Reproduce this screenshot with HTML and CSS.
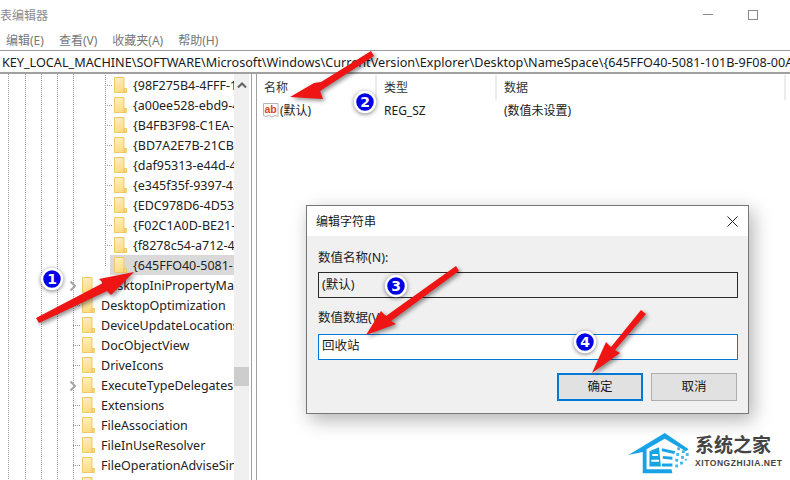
FILE: index.html
```html
<!DOCTYPE html>
<html lang="zh">
<head>
<meta charset="utf-8">
<title>注册表编辑器</title>
<link rel="stylesheet" href="styles.css">
</head>
<body>
<svg class="defs" width="0" height="0">
  <defs>
    <linearGradient id="fold" x1="0" y1="0" x2="0.4" y2="1">
      <stop offset="0" stop-color="#fff1c6"/>
      <stop offset="1" stop-color="#fddc7f"/>
    </linearGradient>
  </defs>
  <symbol id="folder" viewBox="0 0 13 16">
    <path d="M.5.500h9.500v11l2.500 0v4H.5z" fill="url(#fold)" stroke="#efc968"/>
    <path d="M10 11.500v4" stroke="#e6bb50" fill="none"/>
  </symbol>
</svg>
<div class="window">
  <div class="titlebar">
    <span class="title">表编辑器</span>
    <div class="caption">
      <span class="minimize"></span>
      <span class="maximize"></span>
    </div>
  </div>
  <div class="menubar">
    <span>编辑(E)</span><span>查看(V)</span><span>收藏夹(A)</span><span>帮助(H)</span>
  </div>
  <div class="address">KEY_LOCAL_MACHINE\SOFTWARE\Microsoft\Windows\CurrentVersion\Explorer\Desktop\NameSpace\{645FFO40-5081-101B-9F08-00AA002F954E}</div>
  <div class="main">
    <div class="tree">
      <div class="rows">
        <div class="group">
          <div class="row"><svg class="folder"><use href="#folder"/></svg><span>{98F275B4-4FFF-11E0-89E2-7B86</span></div>
          <div class="row"><svg class="folder"><use href="#folder"/></svg><span>{a00ee528-ebd9-48b8-944a-8942</span></div>
          <div class="row"><svg class="folder"><use href="#folder"/></svg><span>{B4FB3F98-C1EA-428d-A78A-D1F5</span></div>
          <div class="row"><svg class="folder"><use href="#folder"/></svg><span>{BD7A2E7B-21CB-41b2-A086-B309</span></div>
          <div class="row"><svg class="folder"><use href="#folder"/></svg><span>{daf95313-e44d-46af-be1b-cbac</span></div>
          <div class="row"><svg class="folder"><use href="#folder"/></svg><span>{e345f35f-9397-435c-8f95-4e92</span></div>
          <div class="row"><svg class="folder"><use href="#folder"/></svg><span>{EDC978D6-4D53-4b2f-A265-EC5F</span></div>
          <div class="row"><svg class="folder"><use href="#folder"/></svg><span>{F02C1A0D-BE21-4350-88B0-7367</span></div>
          <div class="row"><svg class="folder"><use href="#folder"/></svg><span>{f8278c54-a712-415b-b593-B77A</span></div>
          <div class="row selected"><svg class="folder"><use href="#folder"/></svg><span>{645FFO40-5081-101B-9F08-00AA</span></div>
        </div>
        <div class="row upper expandable"><svg class="chev" viewBox="0 0 8 12"><path d="M1.500 1.500 6 6l-4.500 4.500" fill="none" stroke="#a6a6a6" stroke-width="2"/></svg><svg class="folder"><use href="#folder"/></svg><span>DesktopIniPropertyMap</span></div>
        <div class="row upper"><svg class="folder"><use href="#folder"/></svg><span>DesktopOptimization</span></div>
        <div class="row upper"><svg class="folder"><use href="#folder"/></svg><span>DeviceUpdateLocations</span></div>
        <div class="row upper"><svg class="folder"><use href="#folder"/></svg><span>DocObjectView</span></div>
        <div class="row upper"><svg class="folder"><use href="#folder"/></svg><span>DriveIcons</span></div>
        <div class="row upper expandable"><svg class="chev" viewBox="0 0 8 12"><path d="M1.500 1.500 6 6l-4.500 4.500" fill="none" stroke="#a6a6a6" stroke-width="2"/></svg><svg class="folder"><use href="#folder"/></svg><span>ExecuteTypeDelegates</span></div>
        <div class="row upper"><svg class="folder"><use href="#folder"/></svg><span>Extensions</span></div>
        <div class="row upper"><svg class="folder"><use href="#folder"/></svg><span>FileAssociation</span></div>
        <div class="row upper"><svg class="folder"><use href="#folder"/></svg><span>FileInUseResolver</span></div>
        <div class="row upper"><svg class="folder"><use href="#folder"/></svg><span>FileOperationAdviseSinks</span></div>
        <div class="row upper"><svg class="folder"><use href="#folder"/></svg><span>FindExtensions</span></div>
      </div>
      <div class="scrollbar">
        <svg class="up" viewBox="0 0 10 8"><path d="M1 6.500 5 2.500l4 4" fill="none" stroke="#606060" stroke-width="2"/></svg>
        <div class="thumb"></div>
      </div>
    </div>
    <div class="splitter"></div>
    <div class="list">
      <div class="list-head">
        <span class="col-name">名称</span><span class="col-type">类型</span><span class="col-data">数据</span>
      </div>
      <div class="list-row">
        <span class="col-name with-icon">
          <svg class="ab" viewBox="0 0 16 16"><path d="M.5 1.500h14.500v13l-3-1-3 1.500-3-1.500-3 1-2.500-1z" fill="#fff" stroke="#b5b5b5"/><text x="1.500" y="11" class="ab-text">ab</text></svg>
          <span>(默认)</span>
        </span>
        <span class="col-type">REG_SZ</span>
        <span class="col-data">(数值未设置)</span>
      </div>
    </div>
  </div>
</div>

<div class="dialog">
  <div class="dialog-title">
    <span>编辑字符串</span>
    <svg class="close" viewBox="0 0 11 11"><path d="M.5.500l10 10M10.500.500l-10 10" stroke="#222" fill="none"/></svg>
  </div>
  <div class="dialog-body">
    <div class="label">数值名称(N):</div>
    <div class="field readonly">(默认)</div>
    <div class="label second">数值数据(V):</div>
    <div class="field active">回收站</div>
    <div class="buttons">
      <span class="btn primary">确定</span>
      <span class="btn">取消</span>
    </div>
  </div>
</div>

<svg class="annotations" viewBox="0 0 790 480" width="790" height="480">
  <g class="arrows">
    <polygon points="36,318 103,283 99,279 134,272 111,295 107,291 39,323"/>
    <polygon points="371,51 321,82 314,83 290,97 323,99 320,91 374,56"/>
    <polygon points="456,266 386,316 381,311 366,335 396,324 391,321 459,271"/>
    <polygon points="641,310 611,347 606,342 592,373 620,353 615,350 646,314"/>
  </g>
  <g class="badges">
    <circle cx="52" cy="279" r="10"/><text x="52" y="284">1</text>
    <circle cx="365" cy="102" r="10"/><text x="365" y="107">2</text>
    <circle cx="396" cy="286" r="10"/><text x="396" y="291">3</text>
    <circle cx="585" cy="342" r="10"/><text x="585" y="347">4</text>
  </g>
</svg>

<div class="watermark">
  <svg class="logo" viewBox="0 0 64 46">
    <path d="M0 24 38 1l25 17-3 2-22-13-19 11v21h26l1 4H15V21z" fill="#18a3e6"/>
    <path d="M22 20l10-4 2 20H22z" fill="#18a3e6"/>
    <path d="M25 24h6M24 30h8" stroke="#fff" stroke-width="2"/>
    <path d="M35 17l14 3-1 3-13-3zM36 25l10 1v3l-10-1zM35 33h11v3H35z" fill="#18a3e6"/>
    <g fill="#45b5ea">
      <rect x="51" y="16" width="3" height="3"/><rect x="56" y="19" width="3" height="3"/><rect x="60" y="22" width="3" height="3"/>
      <rect x="50" y="22" width="3" height="3"/><rect x="55" y="25" width="3" height="3"/><rect x="59" y="28" width="2" height="2"/>
      <rect x="49" y="28" width="3" height="3"/><rect x="54" y="31" width="3" height="3"/><rect x="49" y="34" width="3" height="3"/>
    </g>
  </svg>
  <div class="brand">
    <div class="brand-cn">系统之家</div>
    <div class="brand-en">XITONGZHIJIA.NET</div>
  </div>
</div>
</body>
</html>
```
FILE: styles.css
```css
* { box-sizing: border-box; }
html, body { margin: 0; padding: 0; }
body {
  position: relative;
  width: 790px;
  height: 480px;
  overflow: hidden;
  background: #fff;
  font-family: "Noto Sans", "Noto Sans CJK SC", sans-serif;
  font-size: 12px;
  color: #1a1a1a;
}
.defs { position: absolute; }
.window { display: flex; flex-direction: column; height: 480px; }

.titlebar { height: 29px; display: flex; align-items: center; justify-content: space-between; }
.title { color: #8a8a8a; font-size: 12px; }
.caption { display: flex; align-items: center; gap: 35px; padding-right: 32px; }
.minimize { width: 10px; height: 1px; background: #8a8a8a; }
.maximize { width: 10px; height: 10px; border: 1px solid #8a8a8a; }

.menubar { height: 21px; display: flex; align-items: center; padding-left: 6px; color: #777; gap: 15px; }

.address {
  height: 24px;
  line-height: 22px;
  border-top: 1px solid #9a9a9a;
  border-bottom: 2px solid #a0a0a0;
  padding-left: 2px;
  font-size: 12.650px;
  white-space: nowrap;
  overflow: hidden;
}

.main { flex: 1; display: flex; min-height: 0; }

.tree {
  width: 252px;
  flex: none;
  display: flex;
  overflow: hidden;
  border-right: 1px solid #a0a0a0;
  background-image:
    linear-gradient(#999 50%, transparent 50%),
    linear-gradient(#999 50%, transparent 50%),
    linear-gradient(#999 50%, transparent 50%),
    linear-gradient(#999 50%, transparent 50%),
    linear-gradient(#999 50%, transparent 50%);
  background-size: 1px 2px;
  background-repeat: repeat-y;
  background-position: 8px 0, 25px 0, 41px 0, 57px 0, 73px 0;
}
.splitter { width: 5px; flex: none; border-right: 1px solid #a0a0a0; }
.rows { width: 234px; flex: none; padding-top: 1px; overflow: hidden; }
.group {
  background-image: repeating-linear-gradient(#999 0 1px, transparent 1px 2px);
  background-size: 1px 191px;
  background-repeat: no-repeat;
  background-position: 105px 0;
}
.group .row { padding-left: 114px; }
.group .row::before { left: 105px; }

.row {
  position: relative;
  height: 20px;
  display: flex;
  align-items: center;
  white-space: nowrap;
  font-size: 12.500px;
  color: #222;
  overflow: hidden;
}
.row::before {
  content: "";
  position: absolute;
  top: 10px;
  width: 8px;
  height: 1px;
  background-image: linear-gradient(90deg, #999 50%, transparent 50%);
  background-size: 2px 1px;
}
.upper { padding-left: 82px; }
.upper::before { left: 73px; }
.expandable::before { display: none; }
.group .selected { background: #d9d9d9; margin-left: 110px; padding-left: 4px; }
.group .selected::before { display: none; }
.folder { width: 13px; height: 16px; flex: none; margin-right: 6px; }
.chev { position: absolute; left: 69px; top: 5px; width: 8px; height: 12px; }

.scrollbar { position: relative; width: 15px; flex: none; background: #f0f0f0; }
.up { position: absolute; left: 3px; top: 7px; width: 10px; height: 8px; }
.thumb { position: absolute; left: 0; top: 293px; width: 15px; height: 19px; background: #cdcdcd; }

.list { flex: 1; min-width: 0; }
.list-head { height: 26px; display: flex; align-items: center; color: #333; }
.list-row { height: 20px; display: flex; align-items: center; }
.col-name { width: 120px; padding-left: 7px; flex: none; }
.col-type { width: 120px; padding-left: 7px; flex: none; }
.col-data { width: 289px; padding-left: 7px; flex: none; }
.list-head span { height: 25px; line-height: 26px; border-right: 2px solid #ececec; }
.with-icon { display: flex; align-items: center; gap: 1px; padding-left: 6px; }
.ab { width: 16px; height: 16px; flex: none; }
.ab-text { font: 700 10.500px "Liberation Sans", sans-serif; fill: #d8482a; }

.dialog {
  position: absolute;
  left: 306px;
  top: 205px;
  width: 443px;
  height: 209px;
  border: 1px solid #777;
  background: #f0f0f0;
  box-shadow: 4px 6px 18px rgba(0,0,0,.3);
}
.dialog-title {
  height: 30px;
  background: #fff;
  display: flex;
  align-items: center;
  justify-content: space-between;
  padding: 0 10px 0 9px;
}
.close { width: 11px; height: 11px; }
.dialog-body { padding: 14px 10px 0 11px; }
.label { height: 16px; line-height: 16px; font-size: 12.500px; color: #222; }
.second { margin-top: 12px; }
.field {
  height: 26px;
  margin-top: 6px;
  border: 1px solid #2a2a2a;
  padding-left: 3px;
  line-height: 24px;
  font-size: 12.500px;
}
.second + .field { margin-top: 8px; line-height: 22px; }
.active { border-color: #0078d7; background: #fff; }
.buttons { display: flex; justify-content: flex-end; gap: 8px; margin-top: 13px; padding-right: 1px; }
.btn {
  width: 86px;
  height: 28px;
  border: 1px solid #adadad;
  background: #e1e1e1;
  text-align: center;
  line-height: 26px;
  font-size: 12.500px;
}
.primary { border: 2px solid #0078d7; line-height: 24px; }

.annotations { position: absolute; left: 0; top: 0; }
.arrows polygon { fill: #f01515; filter: drop-shadow(2px 2px 2px rgba(0,0,0,.45)); }
.badges circle { fill: #0000e6; stroke: #fff; stroke-width: 2.500; filter: drop-shadow(0 1px 2px rgba(0,0,0,.5)); }
.badges text { fill: #fff; font: 700 14px "DejaVu Sans", sans-serif; text-anchor: middle; }

.watermark {
  position: absolute;
  left: 628px;
  top: 432px;
  display: flex;
  gap: 5px;
}
.logo { width: 62px; height: 44px; flex: none; }
.brand { padding-top: 1px; }
.brand-cn { font: 700 19px/22px "Noto Sans CJK SC", sans-serif; color: #444; }
.brand-en { font: 700 8.500px/12px "Liberation Sans", sans-serif; color: #444; margin-top: 2px; letter-spacing: .55px; }
```
